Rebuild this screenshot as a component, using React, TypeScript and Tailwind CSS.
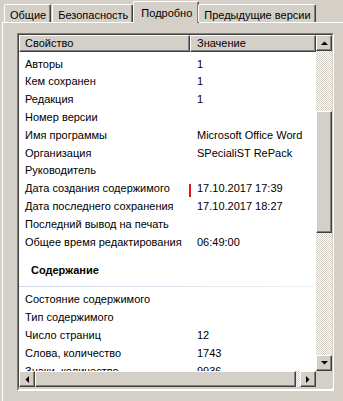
import React from "react";

type Row = { name: string; value?: string };

const topRows: Row[] = [
  { name: "Авторы", value: "1" },
  { name: "Кем сохранен", value: "1" },
  { name: "Редакция", value: "1" },
  { name: "Номер версии" },
  { name: "Имя программы", value: "Microsoft Office Word" },
  { name: "Организация", value: "SPecialiST RePack" },
  { name: "Руководитель" },
  { name: "Дата создания содержимого", value: "17.10.2017 17:39" },
  { name: "Дата последнего сохранения", value: "17.10.2017 18:27" },
  { name: "Последний вывод на печать" },
  { name: "Общее время редактирования", value: "06:49:00" },
];

const bottomRows: Row[] = [
  { name: "Состояние содержимого" },
  { name: "Тип содержимого" },
  { name: "Число страниц", value: "12" },
  { name: "Слова, количество", value: "1743" },
  { name: "Знаки, количество", value: "9936" },
];

const tabs = ["Общие", "Безопасность", "Подробно", "Предыдущие версии"];

// classic raised 3d button
const raised =
  "border border-t-white border-l-white border-r-[#404040] border-b-[#404040] shadow-[inset_-1px_-1px_0_#808080] bg-[#d4d0c8]";

const checker =
  "bg-[repeating-conic-gradient(#d4d0c8_0_25%,#ffffff_0_50%)] bg-[length:2px_2px]";

function Arrow({ dir }: { dir: "up" | "down" | "left" | "right" }) {
  const pts = {
    up: "0,4 7,4 3.5,0.5",
    down: "0,0 7,0 3.5,3.5",
    left: "4,0 4,7 0.5,3.5",
    right: "0,0 0,7 3.5,3.5",
  }[dir];
  const vertical = dir === "up" || dir === "down";
  return (
    <svg width={vertical ? 7 : 4} height={vertical ? 4 : 7} className="block">
      <polygon points={pts} fill="#000" />
    </svg>
  );
}

function PropRow({ row, red }: { row: Row; red?: boolean }) {
  return (
    <div className="relative flex h-[17.8px] items-center whitespace-nowrap overflow-hidden">
      {red && <div className="absolute left-[170px] top-[4px] h-[20px] w-[2px] bg-[#e81123]" />}
      <div className="w-[171px] shrink-0 pl-[6px] overflow-hidden">{row.name}</div>
      <div className="pl-[7px]">{row.value}</div>
    </div>
  );
}

export default function App() {
  return (
    <div
      className="w-[343px] h-[401px] bg-[#d4d0c8] overflow-hidden flex flex-col text-[11px] text-black"
      style={{ fontFamily: '"Liberation Sans", Arial, sans-serif' }}
    >
      {/* Tabs */}
      <div className="flex items-end h-[22px] pl-[4px] relative z-10">
        {tabs.map((t) => {
          const active = t === "Подробно";
          return (
            <div
              key={t}
              className={
                active
                  ? "h-[22px] -mb-[1px] pl-[7px] pr-[6px] pt-[3px] bg-[#d4d0c8] border-l border-t border-white border-r border-r-[#404040] shadow-[inset_-1px_0_0_#808080] rounded-t-[2px] -ml-[1px] -mr-[1px]"
                  : "h-[18px] mr-[1px] pl-[5px] pr-[4px] pt-[2px] border-l border-t border-white border-r border-r-[#404040] shadow-[inset_-1px_0_0_#808080] rounded-t-[2px]"
              }
            >
              {t}
            </div>
          );
        })}
      </div>

      {/* Panel */}
      <div className="flex-1 ml-[2px] border-l border-t border-white pt-[10px] pl-[14px]">
        <div className="w-[317px] h-[358px] border-2 border-t-[#808080] border-l-[#808080] border-r-white border-b-white">
          <div className="h-full flex flex-col border border-t-[#404040] border-l-[#404040] border-r-[#d4d0c8] border-b-[#d4d0c8] -m-[1px]">
            <div className="flex flex-1 min-h-0">
              {/* Content */}
              <div className="flex-1 bg-white overflow-hidden">
                <div className="flex h-[17px]">
                  <div className={`${raised} w-[171px] pl-[5px] leading-[15px]`}>Свойство</div>
                  <div className={`${raised} flex-1 pl-[6px] leading-[15px]`}>Значение</div>
                </div>
                <div className="pt-[3px]">
                  {topRows.map((r) => (
                    <PropRow key={r.name} row={r} red={r.name === "Дата создания содержимого"} />
                  ))}
                </div>
                <div className="h-[35px] flex items-end pb-[7px] pl-[12px] font-bold">
                  Содержание
                </div>
                <div className="h-px bg-gradient-to-r from-[#cfd8e6] to-[#eef2f8]" />
                <div className="pt-[4px]">
                  {bottomRows.map((r) => (
                    <PropRow key={r.name} row={r} />
                  ))}
                </div>
              </div>
              {/* Vertical scrollbar */}
              <div className={`w-[16px] flex flex-col ${checker}`}>
                <div className={`${raised} h-[16px] flex items-center justify-center`}>
                  <Arrow dir="up" />
                </div>
                <div className="h-[60px]" />
                <div className={`${raised} h-[122px]`} />
                <div className="flex-1" />
                <div className={`${raised} h-[16px] flex items-center justify-center`}>
                  <Arrow dir="down" />
                </div>
              </div>
            </div>
            {/* Horizontal scrollbar */}
            <div className="flex h-[16px]">
              <div className={`flex flex-1 ${checker}`}>
                <div className={`${raised} w-[16px] flex items-center justify-center`}>
                  <Arrow dir="left" />
                </div>
                <div className={`${raised} w-[261px]`} />
                <div className="flex-1" />
                <div className={`${raised} w-[16px] flex items-center justify-center`}>
                  <Arrow dir="right" />
                </div>
              </div>
              <div className="w-[16px] bg-[#d4d0c8]" />
            </div>
          </div>
        </div>
      </div>
    </div>
  );
}
